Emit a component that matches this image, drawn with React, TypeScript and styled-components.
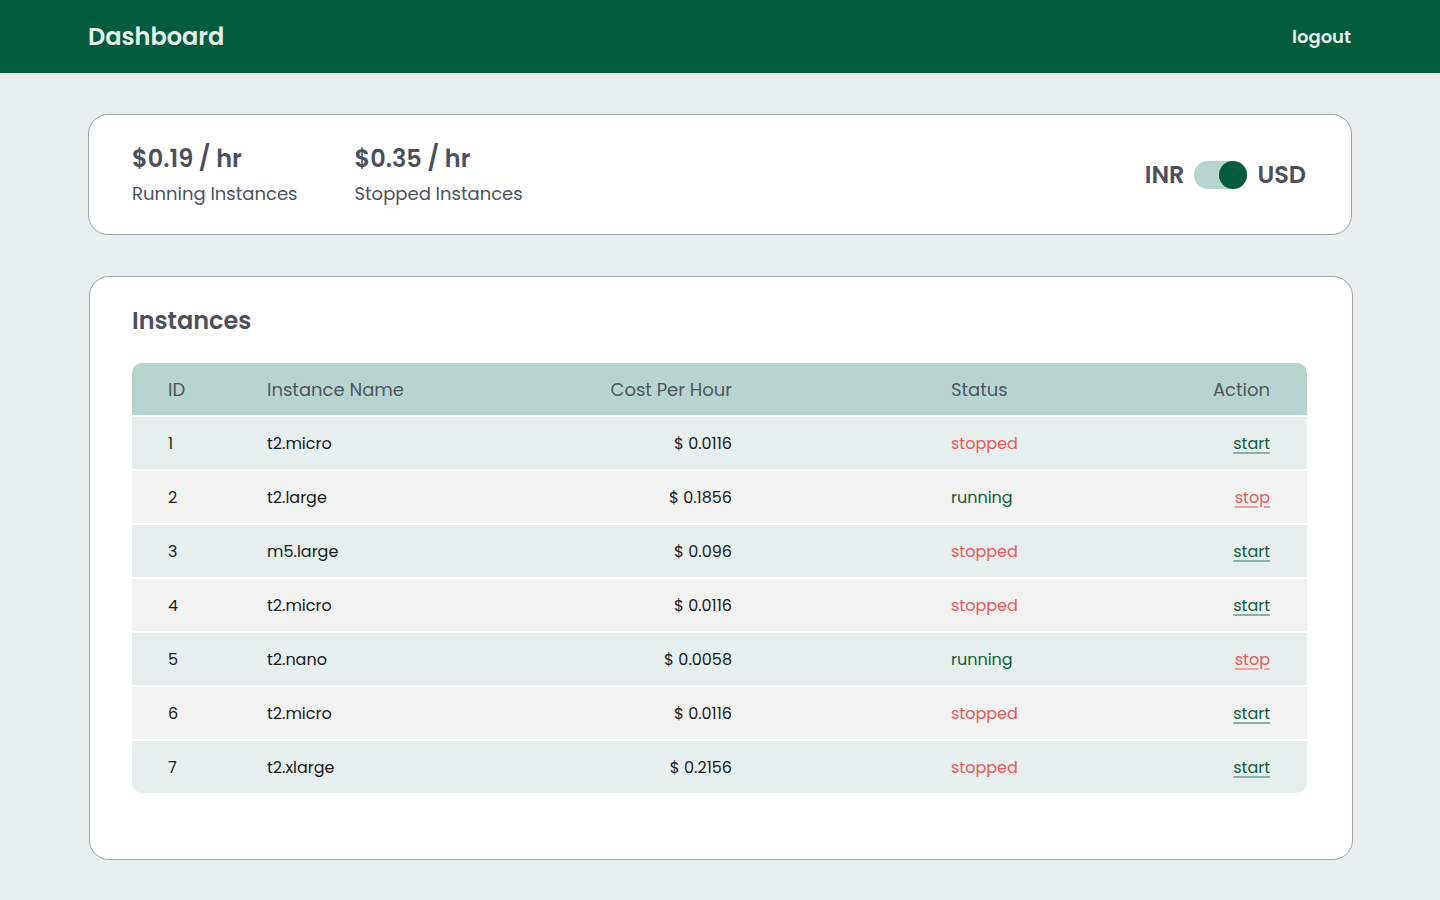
import React, { useState } from 'react';
import styled, { createGlobalStyle } from 'styled-components';

type Status = 'running' | 'stopped';

interface Instance {
  id: number;
  name: string;
  cost: string;
  status: Status;
}

const instances: Instance[] = [
  { id: 1, name: 't2.micro', cost: '0.0116', status: 'stopped' },
  { id: 2, name: 't2.large', cost: '0.1856', status: 'running' },
  { id: 3, name: 'm5.large', cost: '0.096', status: 'stopped' },
  { id: 4, name: 't2.micro', cost: '0.0116', status: 'stopped' },
  { id: 5, name: 't2.nano', cost: '0.0058', status: 'running' },
  { id: 6, name: 't2.micro', cost: '0.0116', status: 'stopped' },
  { id: 7, name: 't2.xlarge', cost: '0.2156', status: 'stopped' }
];

const GlobalStyle = createGlobalStyle`
  body {
    margin: 0;
    background-color: #e6efed;
    font-family: 'Poppins', Inter, 'Open Sans', sans-serif;
  }
`;

const App = (): JSX.Element => {
  const [usd, setUsd] = useState(true);

  return (
    <>
      <GlobalStyle />
      <StyledNav>
        <StyledBrand>Dashboard</StyledBrand>
        <StyledLogout>logout</StyledLogout>
      </StyledNav>
      <StyledMain>
        <StyledSummaryCard>
          <StyledStats>
            <div>
              <StyledStatValue>$0.19 / hr</StyledStatValue>
              <StyledStatLabel>Running Instances</StyledStatLabel>
            </div>
            <div>
              <StyledStatValue>$0.35 / hr</StyledStatValue>
              <StyledStatLabel>Stopped Instances</StyledStatLabel>
            </div>
          </StyledStats>
          <StyledCurrency>
            <span>INR</span>
            <StyledSwitch on={usd} onClick={(): void => setUsd(!usd)}>
              <StyledKnob on={usd} />
            </StyledSwitch>
            <span>USD</span>
          </StyledCurrency>
        </StyledSummaryCard>

        <StyledTableCard>
          <StyledTitle>Instances</StyledTitle>
          <StyledTable>
            <StyledHeadRow>
              <StyledCell>ID</StyledCell>
              <StyledCell>Instance Name</StyledCell>
              <StyledCell align="right">Cost Per Hour</StyledCell>
              <StyledCell className="status">Status</StyledCell>
              <StyledCell align="right" className="action">
                Action
              </StyledCell>
            </StyledHeadRow>
            {instances.map(
              (item: Instance, i: number): JSX.Element => (
                <StyledRow key={item.id} odd={i % 2 === 0}>
                  <StyledCell>{item.id}</StyledCell>
                  <StyledCell>{item.name}</StyledCell>
                  <StyledCell align="right">$ {item.cost}</StyledCell>
                  <StyledCell className="status">
                    <StyledStatus status={item.status}>{item.status}</StyledStatus>
                  </StyledCell>
                  <StyledCell align="right" className="action">
                    <StyledAction href="#" stop={item.status === 'running'}>
                      {item.status === 'running' ? 'stop' : 'start'}
                    </StyledAction>
                  </StyledCell>
                </StyledRow>
              )
            )}
          </StyledTable>
        </StyledTableCard>
      </StyledMain>
    </>
  );
};

const StyledNav = styled.header`
  height: 73px;
  background-color: #005c3c;
  display: flex;
  align-items: center;
  justify-content: space-between;
  padding: 0 89px 0 88px;
`;
const StyledBrand = styled.h1`
  margin: 0;
  font-size: 24px;
  font-weight: 600;
  color: #e6efed;
`;
const StyledLogout = styled.button`
  border: none;
  background: transparent;
  padding: 0;
  cursor: pointer;
  font-family: inherit;
  font-size: 18px;
  font-weight: 600;
  color: #e6efed;
`;
const StyledMain = styled.main`
  padding: 41px 88px 40px;
  display: flex;
  flex-direction: column;
  gap: 41px;
`;
const StyledSummaryCard = styled.section`
  box-sizing: border-box;
  height: 121px;
  background: #ffffff;
  border: 1px solid #9ea3a9;
  border-radius: 20px;
  display: flex;
  align-items: center;
  justify-content: space-between;
  padding: 0 45px 0 43px;
`;
const StyledStats = styled.div`
  display: flex;
  gap: 57px;
  align-self: flex-start;
  padding-top: 28px;
`;
const StyledStatValue = styled.div`
  font-size: 24px;
  font-weight: 600;
  color: #4c505c;
  line-height: 32px;
`;
const StyledStatLabel = styled.div`
  margin-top: 7px;
  font-size: 18px;
  color: #4c505c;
  line-height: 24px;
`;
const StyledCurrency = styled.div`
  display: flex;
  align-items: center;
  gap: 10px;
  font-size: 24px;
  font-weight: 600;
  color: #4c505c;
`;
const StyledSwitch = styled.button<{ on: boolean }>`
  width: 53px;
  height: 28px;
  border: none;
  padding: 0;
  border-radius: 14px;
  background-color: #b8d4d0;
  display: flex;
  justify-content: ${({ on }: { on: boolean }): string => (on ? 'flex-end' : 'flex-start')};
  cursor: pointer;
`;
const StyledKnob = styled.span<{ on: boolean }>`
  width: 28px;
  height: 28px;
  border-radius: 50%;
  background-color: ${({ on }: { on: boolean }): string => (on ? '#005c3c' : '#ffffff')};
`;
const StyledTableCard = styled.section`
  background: #ffffff;
  border: 1px solid #9ea3a9;
  border-radius: 20px;
  margin: 0 -1px 0 1px;
  padding: 26px 45px 66px 42px;
`;
const StyledTitle = styled.h2`
  margin: 0 0 24px;
  font-size: 24px;
  font-weight: 600;
  line-height: 36px;
  color: #4c505c;
`;
const StyledTable = styled.div`
  display: flex;
  flex-direction: column;
  gap: 2px;
  border-radius: 10px;
  overflow: hidden;
`;
const StyledHeadRow = styled.div`
  display: grid;
  grid-template-columns: 135px 234px 231px 375px 200px;
  align-items: center;
  height: 52px;
  background-color: #b8d4d0;
  font-size: 18px;
  color: #50555f;
`;
const StyledRow = styled.div<{ odd: boolean }>`
  display: grid;
  grid-template-columns: 135px 234px 231px 375px 200px;
  align-items: center;
  height: 52px;
  background-color: ${({ odd }: { odd: boolean }): string => (odd ? '#e6efed' : '#f2f2f2')};
  font-size: 16px;
  color: #1b1b1b;
`;
const StyledCell = styled.div<{ align?: string }>`
  text-align: ${({ align }: { align?: string }): string => align || 'left'};

  &:first-child {
    padding-left: 36px;
  }
  &.status {
    padding-left: 219px;
  }
  &.action {
    padding-right: 37px;
  }
`;
const StyledStatus = styled.span<{ status: Status }>`
  color: ${({ status }: { status: Status }): string => (status === 'running' ? '#0f5e3d' : '#ea5a5a')};
`;
const StyledAction = styled.a<{ stop: boolean }>`
  color: ${({ stop }: { stop: boolean }): string => (stop ? '#ea5a5a' : '#0f5e3d')};
  text-decoration: underline;
  text-decoration-color: ${({ stop }: { stop: boolean }): string => (stop ? '#f0a0a0' : '#86b3a2')};
  text-decoration-thickness: 2px;
  text-underline-offset: 3px;
`;

export default App;
